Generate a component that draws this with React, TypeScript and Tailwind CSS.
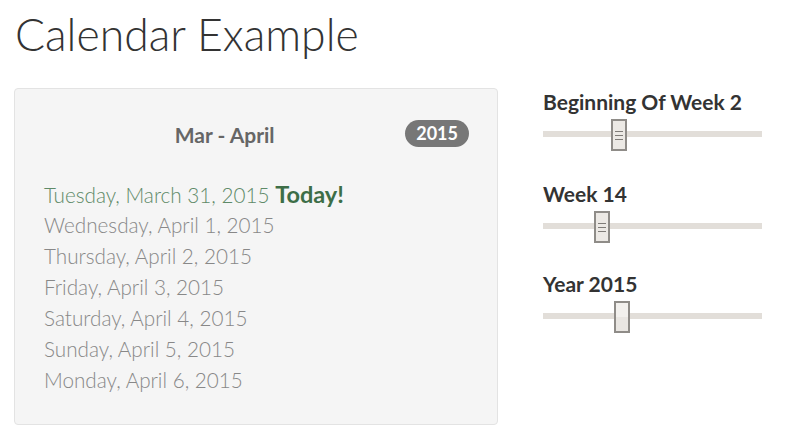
import React from "react";

function Slider({ label, pos, lines = true, top }: { label: string; pos: number; lines?: boolean; top: string }) {
  return (
    <div className={top}>
      <div className="text-[21px] font-bold text-[#333] leading-[24px]">{label}</div>
      <div className="relative h-[32px] mt-[5px]">
        <div className="absolute left-0 right-0 top-[12px] h-[6px] bg-[#e2ded9]" />
        <div
          className="absolute top-0 w-[16px] h-[32px] border-2 border-[#8f8c88] bg-[#ece9e5] flex flex-col items-center justify-center gap-[3px]"
          style={{ left: pos }}
        >
          {lines ? (
            <>
              <div className="w-[8px] h-[1px] bg-[#7f7c78]" />
              <div className="w-[8px] h-[1px] bg-[#7f7c78]" />
              <div className="w-[8px] h-[1px] bg-[#7f7c78]" />
            </>
          ) : (
            <div className="w-full h-full flex flex-col">
              <div className="flex-1 bg-[#f2f0ed]" />
              <div className="flex-1 bg-[#e9e6e2]" />
            </div>
          )}
        </div>
      </div>
    </div>
  );
}

export default function App() {
  const days = [
    "Wednesday, April 1, 2015",
    "Thursday, April 2, 2015",
    "Friday, April 3, 2015",
    "Saturday, April 4, 2015",
    "Sunday, April 5, 2015",
    "Monday, April 6, 2015",
  ];
  return (
    <div className="bg-white w-[788px] h-[437px] overflow-hidden pl-[14px]" style={{ fontFamily: "Lato, 'Open Sans', sans-serif" }}>
      <h1 className="text-[44.5px] font-light text-[#333] leading-[48px] pt-[10px] pl-[1px]">Calendar Example</h1>
      <div className="flex mt-[30px]">
        <div className="w-[484px] h-[337px] bg-[#f5f5f5] border border-[#e3e3e3] rounded-[4px] pl-[29px] pr-[28px]">
          <div className="flex items-center mt-[29px]">
            <div className="flex-1 text-center text-[21px] font-bold text-[#666] leading-[29px] pt-[2px]">Mar - April</div>
            <div className="h-[27px] px-[11px] rounded-full bg-[#777] text-white text-[18px] font-bold leading-[27px]">2015</div>
          </div>
          <div className="mt-[30px] text-[20.7px] font-light leading-[31px] text-[#888]">
            <div className="text-[#5e8a68] h-[31px]">
              Tuesday, March 31, 2015 <span className="font-bold text-[#3d6e47] text-[23.5px]">Today!</span>
            </div>
            {days.map((d) => (
              <div key={d}>{d}</div>
            ))}
          </div>
        </div>
        <div className="ml-[45px] w-[219px] pt-[2px]">
          <Slider label="Beginning Of Week 2" pos={68} top="" />
          <Slider label="Week 14" pos={51} top="mt-[31px]" />
          <Slider label="Year 2015" pos={71} lines={false} top="mt-[29px]" />
        </div>
      </div>
    </div>
  );
}
